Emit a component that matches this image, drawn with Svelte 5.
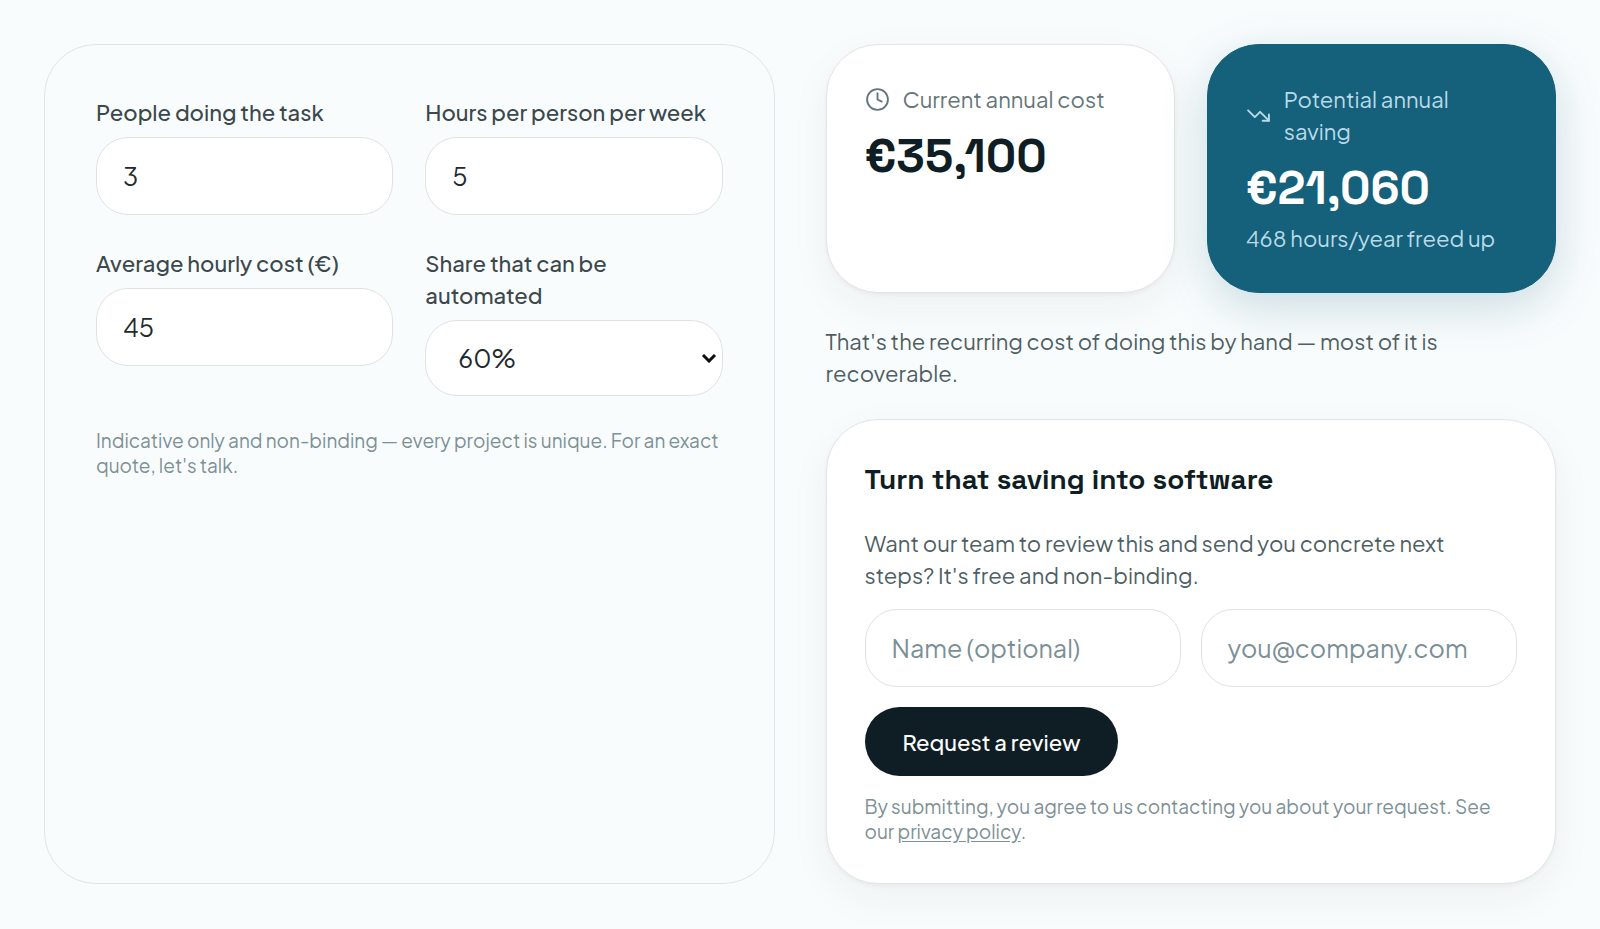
<script>
  let people = $state(3);
  let hours = $state(5);
  let rate = $state(45);
  let share = $state(60);

  const WEEKS = 52;
  const format = (n) => '€' + Math.round(n).toLocaleString('en-US');

  let annualHours = $derived(people * hours * WEEKS);
  let annualCost = $derived(annualHours * rate);
  let saving = $derived((annualCost * share) / 100);
  let freed = $derived(Math.round((annualHours * share) / 100));
</script>

<main class="page">
  <section class="panel">
    <div class="fields">
      <div class="field">
        <label for="people">People doing the task</label>
        <input id="people" class="control" type="text" inputmode="numeric" bind:value={people} />
      </div>
      <div class="field">
        <label for="hours">Hours per person per week</label>
        <input id="hours" class="control" type="text" inputmode="numeric" bind:value={hours} />
      </div>
      <div class="field">
        <label for="rate">Average hourly cost (€)</label>
        <input id="rate" class="control" type="text" inputmode="numeric" bind:value={rate} />
      </div>
      <div class="field">
        <label for="share">Share that can be<br />automated</label>
        <div class="select">
          <select id="share" class="control" bind:value={share}>
            {#each [20, 40, 60, 80] as option}
              <option value={option}>{option}%</option>
            {/each}
          </select>
          <svg class="chevron" viewBox="0 0 16 10" aria-hidden="true"><path d="M2 2 8 8 14 2" /></svg>
        </div>
      </div>
    </div>
    <p class="note">Indicative only and non-binding — every project is unique. For an exact quote, let's talk.</p>
  </section>

  <div class="results">
    <div class="stats">
      <article class="stat card">
        <h2 class="stat-label">
          <svg class="icon" viewBox="0 0 24 24" aria-hidden="true">
            <circle cx="12" cy="12" r="10" /><path d="M12 6v6l4 2" />
          </svg>
          <span>Current annual cost</span>
        </h2>
        <p class="amount">{format(annualCost)}</p>
      </article>
      <article class="stat accent">
        <h2 class="stat-label">
          <svg class="icon" viewBox="0 0 24 24" aria-hidden="true">
            <path d="M22 17 13.5 8.5l-5 5L2 7" /><path d="M16 17h6v-6" />
          </svg>
          <span>Potential annual saving</span>
        </h2>
        <p class="amount">{format(saving)}</p>
        <p class="freed">{freed} hours/year freed up</p>
      </article>
    </div>

    <p class="summary">That's the recurring cost of doing this by hand — most of it is recoverable.</p>

    <form class="lead card" onsubmit={(e) => e.preventDefault()}>
      <h3>Turn that saving into software</h3>
      <p class="pitch">Want our team to review this and send you concrete next steps? It's free and non-binding.</p>
      <div class="contact">
        <input class="control" type="text" placeholder="Name (optional)" aria-label="Name (optional)" />
        <input class="control" type="email" placeholder="you@company.com" aria-label="Email" />
      </div>
      <button type="submit">Request a review</button>
      <p class="note">By submitting, you agree to us contacting you about your request. See our <a href="#privacy">privacy policy</a>.</p>
    </form>
  </div>
</main>

<style>
  :global(body) {
    margin: 0;
    background: #f9fcfd;
  }

  .page {
    box-sizing: border-box;
    display: grid;
    grid-template-columns: 1fr 1fr;
    gap: 51px;
    padding: 44px;
    font-family: 'Plus Jakarta Sans', Inter, sans-serif;
    font-size: 22px;
    line-height: 32px;
    color: #3b484c;
  }

  h2,
  h3,
  p {
    margin: 0;
    font-weight: 400;
  }

  .panel {
    border: 1px solid #dfe5e7;
    border-radius: 52px;
    padding: 51px;
  }

  .fields,
  .stats {
    display: grid;
    grid-template-columns: 1fr 1fr;
    gap: 32px;
  }

  .fields {
    align-items: start;
  }

  .field {
    display: grid;
    gap: 9px;
    font-weight: 500;
  }

  .control {
    box-sizing: border-box;
    display: block;
    width: 100%;
    min-width: 0;
    height: 78px;
    margin: 0;
    padding: 0 26px;
    border: 1px solid #dfe3e5;
    border-radius: 32px;
    background: #fff;
    color: #22292c;
    font: inherit;
    font-size: 25px;
    font-weight: 400;
    outline: none;
  }

  .control::placeholder {
    color: #7b8f96;
    opacity: 1;
  }

  .select {
    position: relative;
  }

  select.control {
    appearance: none;
    height: 76px;
    padding: 0 32px;
  }

  .chevron {
    position: absolute;
    right: 6px;
    top: 50%;
    width: 16px;
    height: 10px;
    transform: translateY(-50%);
    fill: none;
    stroke: #0b0f10;
    stroke-width: 3;
    pointer-events: none;
  }

  .note {
    color: #7d9095;
    font-size: 19px;
    line-height: 25px;
  }

  .panel .note {
    margin-top: 32px;
  }

  .results {
    display: flex;
    flex-direction: column;
  }

  .card {
    border: 1px solid #e1e5e7;
    background: #fff;
    box-shadow: 0 2px 4px rgba(15, 30, 36, 0.04), 0 14px 40px rgba(15, 30, 36, 0.05);
  }

  .stat {
    border-radius: 52px;
    padding: 38px;
  }

  .accent {
    border: 1px solid #15607a;
    background: #15607a;
    color: #b9dbe8;
    box-shadow: 0 14px 48px rgba(21, 96, 122, 0.2);
  }

  .stat-label {
    display: flex;
    align-items: center;
    gap: 13px;
    font-size: 22px;
    color: #64757a;
  }

  .accent .stat-label {
    color: inherit;
  }

  .icon {
    flex: none;
    width: 25px;
    height: 25px;
    fill: none;
    stroke: currentColor;
    stroke-width: 1.8;
    stroke-linecap: round;
    stroke-linejoin: round;
  }

  .amount {
    margin: 9px 0 2px;
    color: #0f1e24;
    font-family: 'Space Grotesk', Inter, sans-serif;
    font-size: 47px;
    font-weight: 600;
    line-height: 64px;
  }

  .accent .amount {
    color: #fff;
  }

  .summary,
  .pitch {
    color: #4e5f64;
  }

  .summary {
    margin: 32px 0 30px;
  }

  .lead {
    flex: 1;
    border-radius: 52px;
    padding: 38px 38px 39px;
  }

  h3 {
    color: #0f1e24;
    font-family: 'Space Grotesk', Inter, sans-serif;
    font-size: 28px;
    font-weight: 600;
    line-height: 43px;
  }

  .pitch {
    margin-top: 26px;
  }

  .contact {
    display: grid;
    grid-template-columns: 1fr 1fr;
    gap: 20px;
    margin: 18px 0 20px;
  }

  button {
    display: block;
    height: 69px;
    margin: 0 0 18px;
    padding: 0 38px;
    border: 0;
    border-radius: 35px;
    background: #0f1e24;
    color: #fff;
    font: inherit;
    font-weight: 500;
  }

  a {
    color: inherit;
    text-underline-offset: 2px;
  }
</style>
